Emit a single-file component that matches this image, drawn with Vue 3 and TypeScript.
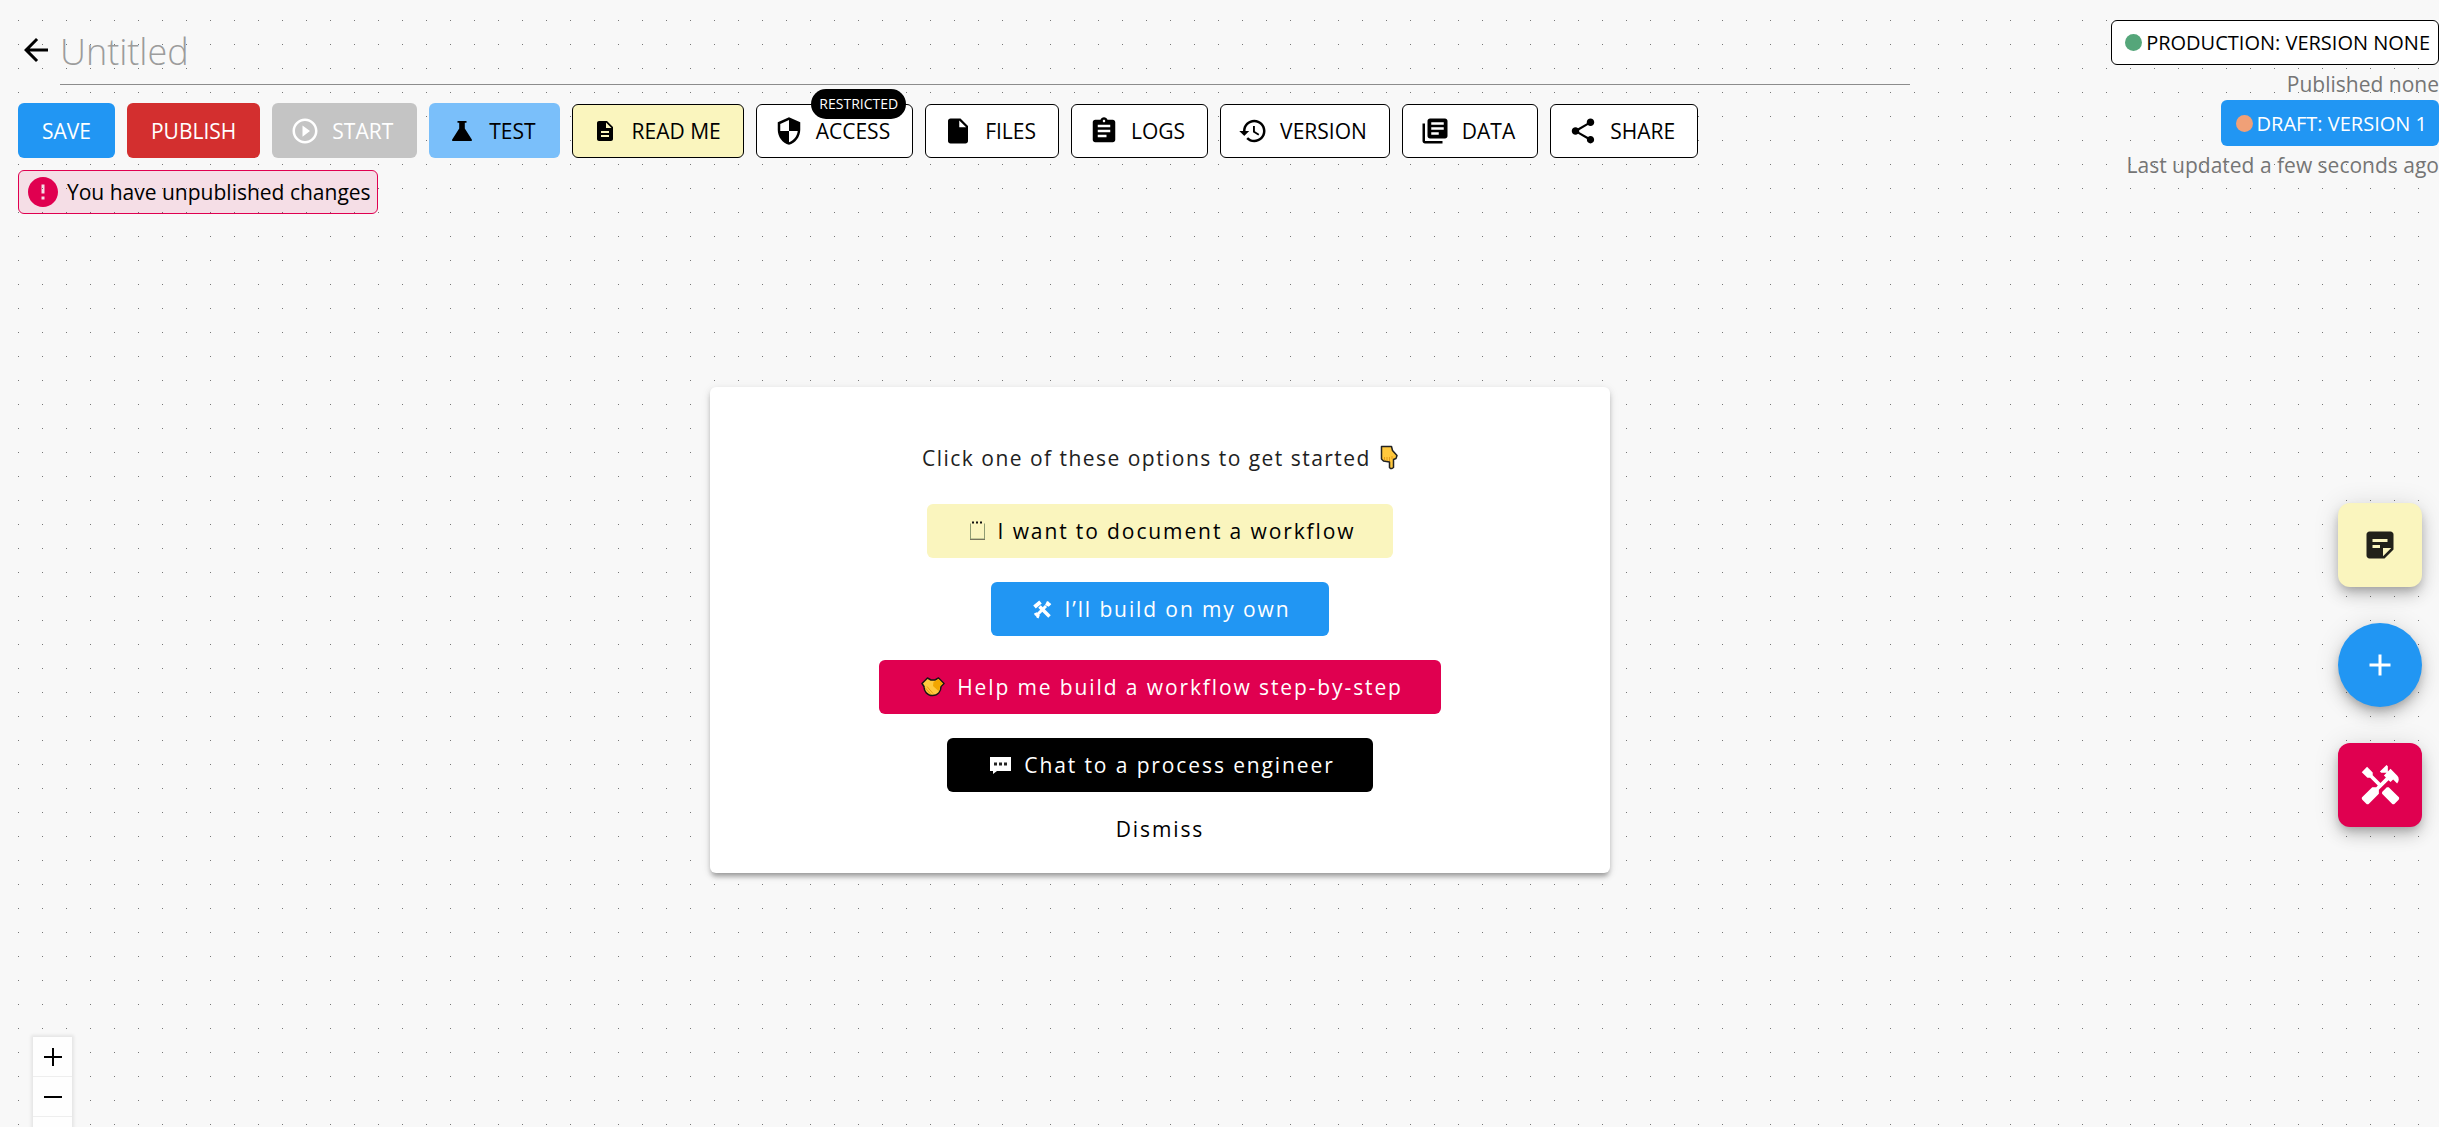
<script setup lang="ts">
interface Tool {
  label: string
  icon?: string
  size?: number
  tone: string
  badge?: string
  disabled?: boolean
}

const icons: Record<string, string> = {
  back: 'M20 11H7.83l5.59-5.59L12 4l-8 8 8 8 1.41-1.41L7.83 13H20v-2z',
  play: 'M10 16.5l6-4.5-6-4.5v9zM12 2C6.48 2 2 6.48 2 12s4.48 10 10 10 10-4.48 10-10S17.52 2 12 2zm0 18c-4.41 0-8-3.59-8-8s3.59-8 8-8 8 3.59 8 8-3.59 8-8 8z',
  flask: 'M7.5 2h9v1.800h-1.700V9.500L21.800 20.500c.4.8 0 1.500-.8 1.500H3c-.8 0-1.200-.7-.8-1.500L9.200 9.500V3.800H7.500z',
  doc: 'M14 2H6c-1.1 0-2 .9-2 2v16c0 1.1.9 2 2 2h12c1.1 0 2-.9 2-2V8l-6-6zm2 16H8v-2h8v2zm0-4H8v-2h8v2zm-3-5V3.5L18.5 9H13z',
  shield: 'M12 1L3 5v6c0 5.55 3.84 10.74 9 12 5.16-1.26 9-6.45 9-12V5l-9-4zm0 10.99h7c-.53 4.12-3.28 7.79-7 8.94V12H5V6.3l7-3.11v8.8z',
  file: 'M6 2c-1.1 0-1.99.9-1.99 2L4 20c0 1.1.89 2 1.99 2H18c1.1 0 2-.9 2-2V8l-6-6H6zm7 7V3.5L18.5 9H13z',
  logs: 'M19 3h-4.18C14.4 1.84 13.3 1 12 1c-1.3 0-2.4.84-2.82 2H5c-1.1 0-2 .9-2 2v14c0 1.1.9 2 2 2h14c1.1 0 2-.9 2-2V5c0-1.1-.9-2-2-2zm-7 0c.55 0 1 .45 1 1s-.45 1-1 1-1-.45-1-1 .45-1 1-1zm2 14H7v-2h7v2zm3-4H7v-2h10v2zm0-4H7V7h10v2z',
  version: 'M13 3c-4.97 0-9 4.03-9 9H1l3.89 3.89.07.14L9 12H6c0-3.87 3.13-7 7-7s7 3.13 7 7-3.13 7-7 7c-1.93 0-3.68-.79-4.94-2.06l-1.42 1.42C8.27 19.99 10.51 21 13 21c4.97 0 9-4.03 9-9s-4.03-9-9-9zm-1 5v5l4.28 2.54.72-1.21-3.5-2.08V8H12z',
  data: 'M4 6H2v14c0 1.1.9 2 2 2h14v-2H4V6zm16-4H8c-1.1 0-2 .9-2 2v12c0 1.1.9 2 2 2h12c1.1 0 2-.9 2-2V4c0-1.1-.9-2-2-2zm-1 9H9V9h10v2zm-4 4H9v-2h6v2zm4-8H9V5h10v2z',
  share: 'M18 16.08c-.76 0-1.44.3-1.96.77L8.91 12.7c.05-.23.09-.46.09-.7s-.04-.47-.09-.7l7.05-4.11c.54.5 1.25.81 2.04.81 1.66 0 3-1.34 3-3s-1.34-3-3-3-3 1.34-3 3c0 .24.04.47.09.7L8.04 9.81C7.5 9.31 6.79 9 6 9c-1.66 0-3 1.34-3 3s1.34 3 3 3c.79 0 1.5-.31 2.04-.81l7.12 4.16c-.05.21-.08.43-.08.65 0 1.61 1.31 2.92 2.92 2.92s2.92-1.31 2.92-2.92-1.31-2.92-2.92-2.92z',
  alert: 'M12 2C6.48 2 2 6.48 2 12s4.48 10 10 10 10-4.48 10-10S17.52 2 12 2zm1 15h-2v-2h2v2zm0-4h-2V7h2v6z',
  note: 'M19 3H4.99C3.89 3 3 3.9 3 5l.01 14c0 1.1.89 2 1.99 2h10l6-6V5c0-1.1-.9-2-2-2zM7 8h10v2H7V8zm5 6H7v-2h5v2zm2 5.5V14h5.5L14 19.5z',
  add: 'M19 13h-6v6h-2v-6H5v-2h6V5h2v6h6v2z',
  handle: 'M21.67 18.17l-5.3-5.3h-.99l-2.54 2.54v.99l5.3 5.3c.39.39 1.02.39 1.41 0l2.12-2.12c.39-.38.39-1.02 0-1.41z',
  hammer: 'M17.34 10.19l1.41-1.41 2.12 2.12c1.17-1.17 1.17-3.07 0-4.24l-3.54-3.54-1.41 1.41V1.71L15.22 1l-3.54 3.54.71.71h2.83l-1.41 1.41 1.06 1.06-2.89 2.89-4.13-4.13V5.06L4.83 2.04 2 4.87 5.03 7.9h1.41l4.13 4.13-.85.85H7.6l-5.3 5.3c-.39.39-.39 1.02 0 1.41l2.12 2.12c.39.39 1.02.39 1.41 0l5.3-5.3v-2.12l5.15-5.15 1.06 1.05z',
}

const tools: Tool[] = [
  { label: 'SAVE', tone: 'blue' },
  { label: 'PUBLISH', tone: 'red' },
  { label: 'START', tone: 'grey', icon: 'play', size: 30, disabled: true },
  { label: 'TEST', tone: 'sky', icon: 'flask', size: 24 },
  { label: 'READ ME', tone: 'yellow', icon: 'doc', size: 24 },
  { label: 'ACCESS', tone: 'plain', icon: 'shield', size: 30, badge: 'RESTRICTED' },
  { label: 'FILES', tone: 'plain', icon: 'file', size: 30 },
  { label: 'LOGS', tone: 'plain', icon: 'logs', size: 30 },
  { label: 'VERSION', tone: 'plain', icon: 'version', size: 30 },
  { label: 'DATA', tone: 'plain', icon: 'data', size: 30 },
  { label: 'SHARE', tone: 'plain', icon: 'share', size: 30 },
]
</script>

<template>
  <div class="canvas">
    <header class="top">
      <div class="top-left">
        <div class="title-row">
          <button class="back" aria-label="Back">
            <svg viewBox="0 0 24 24" width="36" height="36"><path :d="icons.back" /></svg>
          </button>
          <input class="title" type="text" placeholder="Untitled" aria-label="Workflow title" />
        </div>
        <nav class="toolbar">
          <button v-for="t in tools" :key="t.label" class="btn" :class="t.tone" :disabled="t.disabled">
            <span v-if="t.icon" class="icon-slot">
              <svg viewBox="0 0 24 24" :width="t.size" :height="t.size"><path :d="icons[t.icon]" /></svg>
            </span>
            <span>{{ t.label }}</span>
            <span v-if="t.badge" class="badge">{{ t.badge }}</span>
          </button>
        </nav>
        <div class="notice" role="status">
          <svg viewBox="0 0 24 24" width="36" height="36"><path :d="icons.alert" /></svg>
          <span>You have unpublished changes</span>
        </div>
      </div>
      <aside class="versions">
        <button class="version production"><i class="dot green"></i>PRODUCTION: VERSION NONE</button>
        <p>Published none</p>
        <button class="version draft"><i class="dot orange"></i>DRAFT: VERSION 1</button>
        <p>Last updated a few seconds ago</p>
      </aside>
    </header>

    <main class="stage">
      <section class="card">
        <p class="lead">
          Click one of these options to get started
          <svg viewBox="0 0 18 25" width="18" height="25">
            <path d="M1.5 1.5h10l1 4 4.500 5-1 3-2.500 1v8l-1.500 1h-1.500l-1-1v-5.500l-6-1-2-2z" fill="#ffc83d" stroke="#222" stroke-width="1.5" stroke-linejoin="round" />
            <path d="M4.5 12v3M7 12v4M9.500 12v4M12 11v3" fill="none" stroke="#e39a1c" stroke-width="1" />
          </svg>
        </p>
        <div class="options">
          <button class="option yellow-bg">
            <svg viewBox="0 0 17 20" width="17" height="20">
              <path d="M1.5 2.500v15.500h14V2.500" fill="none" stroke="#8f9c72" stroke-width="1" />
              <path d="M1 18.500h15" stroke="#77745c" stroke-width="1" />
              <path d="M3 1.500h2M7 1.500h2M11 1.500h2" stroke="#111" stroke-width="2" />
            </svg>
            I want to document a workflow
          </button>
          <button class="option blue-bg">
            <svg viewBox="0 0 19 19" width="19" height="19" fill="none" stroke="#fff">
              <path d="M6.5 6.500l10 10" stroke-width="3.5" />
              <path d="M1.5 7l6-5" stroke-width="4" />
              <path d="M13 6l-8.500 8.500" stroke-width="3" />
              <path d="M17.5 3.500l-2 2-2-1 1.500-3M1.500 14.500l2-1 2 2-1 2.500" stroke-width="2.2" />
            </svg>
            I’ll build on my own
          </button>
          <button class="option pink-bg">
            <svg viewBox="0 0 24 20" width="24" height="20">
              <path d="M1 6.500L6.500 1l3.500 2h4L17.500 1 23 6.500l-3 3c0 5-3 9-8.500 9S3 14 3 9.500z" fill="#ffc83d" stroke="#1a1414" stroke-width="1.5" stroke-linejoin="round" />
              <path d="M12.500 5L17.500 2l4.500 4.500-3 3c0 2-.5 3-1.500 4.500L12 9z" fill="#f2a600" />
              <path d="M4 10.500l6 7M6 9.500l6 7" stroke="#e79a13" stroke-width="1" />
            </svg>
            Help me build a workflow step-by-step
          </button>
          <button class="option black-bg">
            <svg viewBox="0 0 23 18" width="23" height="18">
              <path d="M1 1h21v14H8l-4 3v-3H1z" fill="#fff" />
              <path d="M5 6.500h3v3H5zM10 6.500h3v3h-3zM15 6.500h3v3h-3z" fill="#222" />
            </svg>
            Chat to a process engineer
          </button>
        </div>
        <button class="dismiss">Dismiss</button>
      </section>
    </main>

    <div class="fabs">
      <button class="fab note" aria-label="Add note">
        <svg viewBox="0 0 24 24" width="36" height="36"><path :d="icons.note" /></svg>
      </button>
      <button class="fab add" aria-label="Add step">
        <svg viewBox="0 0 24 24" width="36" height="36"><path :d="icons.add" /></svg>
      </button>
      <button class="fab build" aria-label="Build tools">
        <svg viewBox="0 0 24 24" width="45" height="45"><path :d="icons.handle" /><path :d="icons.hammer" /></svg>
      </button>
    </div>

    <div class="zoom">
      <button aria-label="Zoom in"><svg viewBox="0 0 18 18" width="18" height="18"><path d="M8 0h2v8h8v2h-8v8H8v-8H0V8h8z" /></svg></button>
      <button aria-label="Zoom out"><svg viewBox="0 0 18 18" width="18" height="18"><path d="M0 8h18v2H0z" /></svg></button>
      <button aria-label="Fit view"></button>
    </div>
  </div>
</template>

<style>
body { margin: 0; }
</style>

<style scoped>
* { box-sizing: border-box; }
.canvas {
  position: relative;
  height: 100vh;
  overflow: hidden;
  background-color: #f8f8f8;
  background-image: conic-gradient(from 270deg at 1px 1px, #777 90deg, transparent 0);
  background-size: 24px 24px;
  background-position: 18px 20px;
  font-family: "Open Sans", "Noto Sans", sans-serif;
  font-size: 21px;
  color: #000;
}
button { font: inherit; color: inherit; border: 0; padding: 0; background: none; cursor: pointer; white-space: nowrap; }
svg { display: block; fill: currentColor; flex: none; }
.top { display: flex; justify-content: space-between; align-items: flex-start; }
.top-left { width: 80%; padding: 19px 0 0 18px; }
.title-row { display: flex; align-items: flex-start; height: 66px; margin-right: 41px; }
.back { width: 42px; height: 62px; }
.title {
  flex: 1; min-width: 0; height: 66px; padding: 0; border: 0; border-bottom: 1px solid #8c8c8c;
  background: none; font: 300 36px "Open Sans", sans-serif; outline: none;
}
.title::placeholder { color: #9c9c9c; opacity: 1; }
.toolbar { display: flex; gap: 12px; margin-top: 18px; }
.btn {
  position: relative; display: flex; align-items: center; justify-content: center;
  height: 55px; padding: 0 24px; border-radius: 6px; line-height: 36px;
}
.blue { background: #2196f3; color: #fff; }
.red { background: #d32f2f; color: #fff; }
.grey, .sky { padding-left: 18px; }
.grey { background: #c4c4c4; color: #fff; }
.sky { background: #7abffa; }
.yellow, .plain { height: 54px; margin-top: 1px; padding: 0 22px 0 17px; border: 1px solid #000; }
.yellow { background: #faf5be; }
.plain { background: #fff; }
.icon-slot { display: flex; justify-content: center; width: 30px; margin-right: 12px; }
.badge {
  position: absolute; top: -16px; right: 6px; height: 30px; padding: 0 8px; border-radius: 15px;
  background: #000; color: #fff; font-size: 14px; line-height: 30px;
}
.notice {
  display: flex; align-items: center; gap: 6px; width: max-content; height: 44px; margin-top: 12px;
  padding: 0 6px; border: 1px solid #e00050; border-radius: 6px; background: #e000501a;
}
.notice svg { color: #e00050; }
.versions { display: flex; flex-direction: column; align-items: flex-end; padding-top: 20px; color: #757575; white-space: nowrap; }
.versions p { margin: 0; height: 35px; line-height: 38px; }
.version { display: flex; align-items: center; gap: 4px; height: 45px; padding: 0 8px 0 13px; border-radius: 6px; font-size: 20px; }
.production { background: #fff; border: 1px solid #000; color: #000; }
.draft { height: 46px; padding: 0 12px 0 15px; background: #2196f3; color: #fff; }
.dot { width: 17px; height: 17px; border-radius: 50%; }
.green { background: #55a67a; }
.orange { background: #f0a077; }
.stage {
  position: absolute; inset: 0 119px 0 0; display: flex; justify-content: center; align-items: center;
  padding-top: 133px; pointer-events: none;
}
.card {
  display: flex; flex-direction: column; align-items: center; width: 900px; padding: 48px 24px 19px;
  border-radius: 6px; background: #fff; letter-spacing: 0.09em; pointer-events: auto;
  box-shadow: 0 5px 5px -2px #0004, 0 3px 6px #0002, 0 2px 12px #0001;
}
.lead { display: flex; align-items: center; gap: 9px; height: 45px; margin: 0 0 24px; color: #212121; letter-spacing: 0.07em; }
.options { display: flex; flex-direction: column; align-items: center; gap: 24px; }
.option { display: flex; align-items: center; gap: 12px; height: 54px; padding: 0 38px 0 42px; border-radius: 6px; letter-spacing: inherit; }
.yellow-bg { background: #faf5be; }
.blue-bg { background: #2196f3; color: #fff; }
.pink-bg { background: #e00050; color: #fff; }
.black-bg { background: #000; color: #fff; }
.dismiss { height: 50px; margin-top: 12px; letter-spacing: inherit; }
.fabs { position: absolute; top: 503px; right: 17px; display: flex; flex-direction: column; gap: 36px; }
.fab {
  display: flex; align-items: center; justify-content: center; width: 84px; height: 84px; border-radius: 12px;
  box-shadow: 0 5px 8px -2px #0003, 0 9px 15px #00000024, 0 2px 27px #0000001f;
}
.note { background: #faf5be; color: #21211a; }
.add { border-radius: 50%; background: #2196f3; color: #fff; }
.build { background: #e00050; color: #fff; }
.zoom { position: absolute; top: 1037px; left: 33px; box-shadow: 0 0 3px 2px #00000014; }
.zoom button { display: flex; align-items: center; justify-content: center; width: 39px; height: 40px; border-bottom: 1px solid #eee; background: #fefefe; }
</style>
